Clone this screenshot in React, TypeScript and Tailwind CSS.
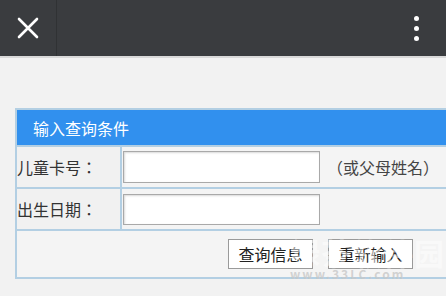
import React from 'react';

const font = { fontFamily: '"Noto Sans CJK SC", "Noto Sans", sans-serif' };
const tc = { fontFamily: '"Noto Sans CJK TC", sans-serif' };

const TopBar = () => (
  <div className="flex h-[56px] items-center bg-[#3a3c3f]">
    <div className="flex h-full w-[57px] items-center justify-center border-r border-[#303234]">
      <svg width="22" height="22" viewBox="0 0 22 22">
        <path d="M2 2 L20 20 M20 2 L2 20" stroke="#ffffff" strokeWidth="2.6" strokeLinecap="round" />
      </svg>
    </div>
    <div className="flex-1" />
    <div className="flex w-[56px] flex-col items-center gap-[5px] pr-[4px]">
      <span className="h-[5px] w-[5px] rounded-full bg-white" />
      <span className="h-[5px] w-[5px] rounded-full bg-white" />
      <span className="h-[5px] w-[5px] rounded-full bg-white" />
    </div>
  </div>
);

const Label = ({ text }: { text: string }) => (
  <div className="flex w-[105px] items-center border-r-2 border-[#b3cfe3] bg-[#f1f1f1] text-[16px] text-[#333]">
    {text}
    <span style={tc}>：</span>
  </div>
);

const App = () => {
  return (
    <div className="relative h-[296px] w-[446px] overflow-hidden bg-[#f2f2f2]" style={font}>
      <TopBar />
      <div className="h-[2px] bg-[#d9d9d9]" />
      <div className="ml-[15px] mt-[50px] w-[460px] border-2 border-[#b3cfe3]">
        <div className="flex h-[35px] items-center bg-[#3190ee] pl-[16px] text-[16px] text-white">
          输入查询条件
        </div>
        <div className="flex h-[42px] border-t-2 border-[#b3cfe3]">
          <Label text="儿童卡号" />
          <div className="flex flex-1 items-center bg-[#f4f4f4] pl-[1px]">
            <input className="h-[32px] w-[197px] border border-[#a9a9a9] bg-white shadow-[inset_1px_1px_2px_rgba(0,0,0,0.15)] outline-none" />
            <span className="ml-[7px] text-[16px] text-[#444]" style={tc}>（或父母姓名）</span>
          </div>
        </div>
        <div className="flex h-[42px] border-t-2 border-[#b3cfe3]">
          <Label text="出生日期" />
          <div className="flex flex-1 items-center bg-[#f4f4f4] pl-[1px]">
            <input className="h-[31px] w-[197px] border border-[#a9a9a9] bg-white shadow-[inset_1px_1px_2px_rgba(0,0,0,0.15)] outline-none" />
          </div>
        </div>
        <div className="flex h-[48px] items-center gap-[15px] border-t-2 border-[#b3cfe3] bg-[#f4f4f4] pl-[211px]">
          <button className="h-[30px] w-[85px] border border-[#9a9a9a] bg-white text-[16px] text-[#222]">
            查询信息
          </button>
          <button className="h-[30px] w-[85px] border border-[#9a9a9a] bg-white text-[16px] text-[#222]">
            重新输入
          </button>
        </div>
      </div>
      <div className="pointer-events-none absolute left-[290px] top-[236px] flex flex-col items-start whitespace-nowrap">
        <span className="text-[30px] font-bold leading-[32px] tracking-[1px] text-white/50">绿茶软件园</span>
        <span className="text-[12px] font-bold leading-[12px] tracking-[2px] text-[#c8c8c8]/80">www.33LC.com</span>
      </div>
    </div>
  );
};

export default App;
